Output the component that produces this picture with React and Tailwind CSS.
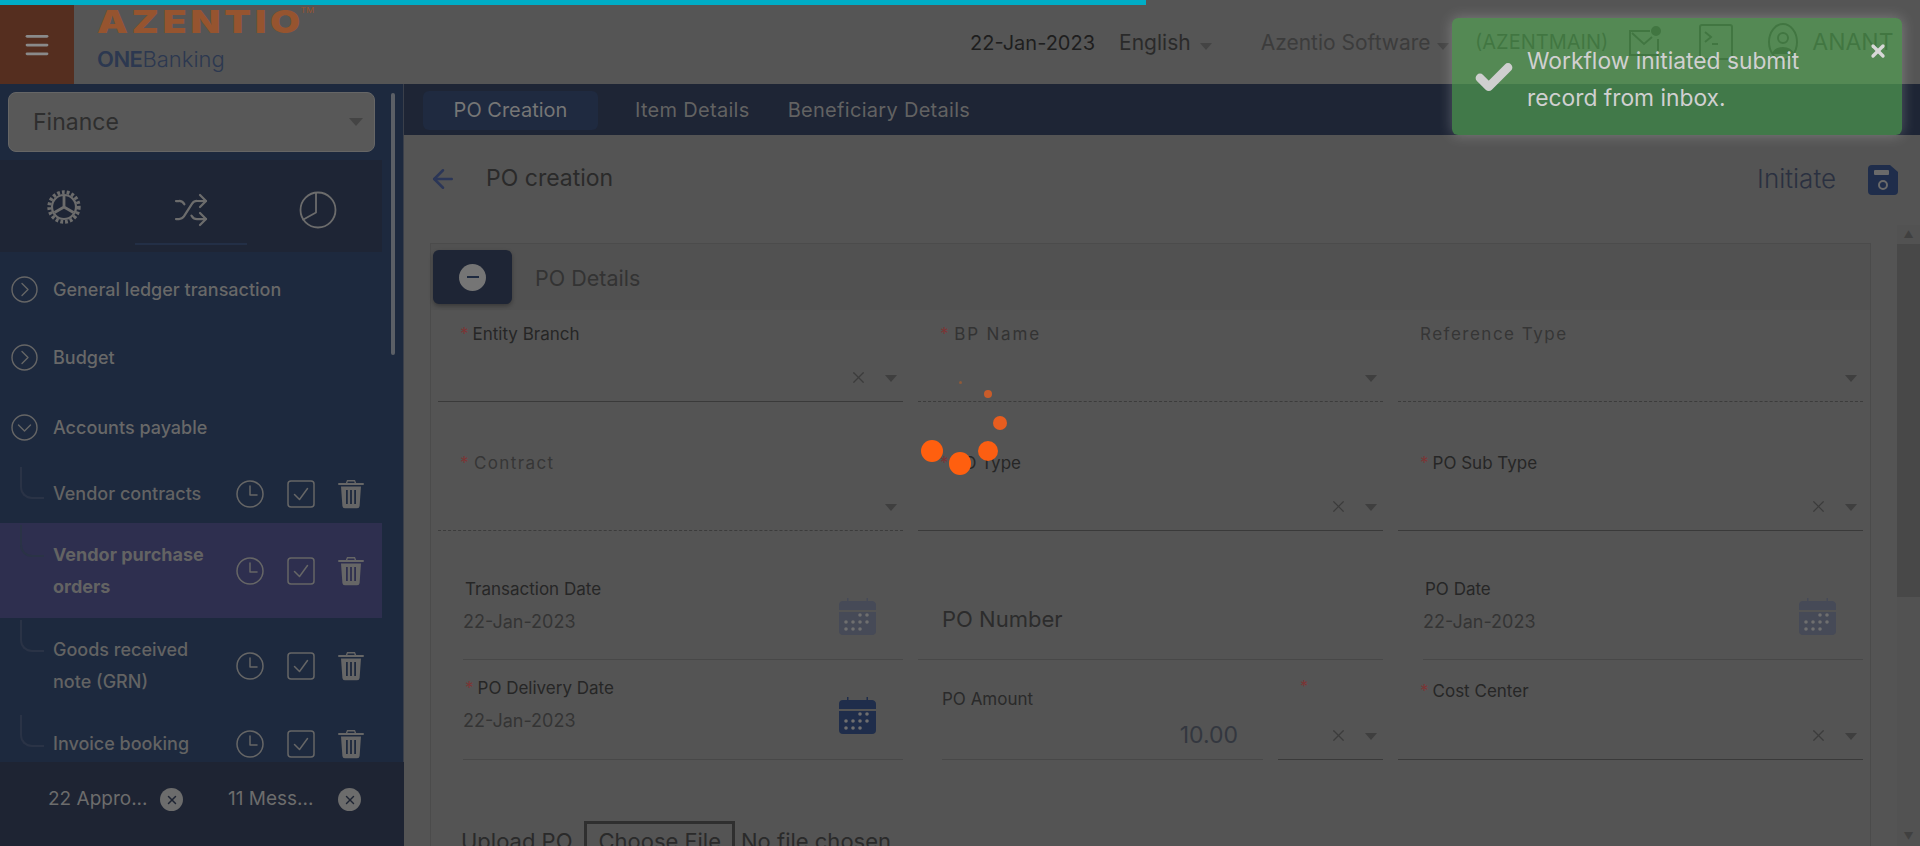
import React from 'react';
import { Shuffle, Menu, ArrowLeft, X, Check } from 'lucide-react';

const Caret = ({ className = 'border-t-[#3f3f3f]' }) => (
  <span className={`inline-block w-0 h-0 border-x-[6px] border-x-transparent border-t-[7px] ${className}`} />
);

const ChevronCircle = ({ down }) => (
  <svg width="27" height="27" viewBox="0 0 27 27" fill="none" stroke="#666" strokeWidth="1.4" strokeLinecap="round" strokeLinejoin="round">
    <circle cx="13.5" cy="13.5" r="12.5" />
    {down ? <path d="M7.5 11l6 6 6-6" /> : <path d="M11 7.5l6 6-6 6" />}
  </svg>
);

const ClockIcon = () => (
  <svg width="28" height="28" viewBox="0 0 28 28" fill="none" stroke="#666" strokeWidth="1.5" strokeLinecap="round" strokeLinejoin="round">
    <circle cx="14" cy="14" r="13" />
    <path d="M14 6v9h7" />
  </svg>
);

const CheckBoxIcon = () => (
  <svg width="28" height="28" viewBox="0 0 28 28" fill="none" stroke="#666" strokeWidth="1.5" strokeLinecap="round" strokeLinejoin="round">
    <rect x="1" y="1" width="26" height="26" rx="3" />
    <path d="M7.5 14.500l5 5 8-11" />
  </svg>
);

const TrashIcon = () => (
  <svg width="26" height="30" viewBox="0 0 26 30" fill="#666">
    <path d="M9 1h8l1.2 3H25a1 1 0 0 1 0 2H1a1 1 0 0 1 0-2h6.800zM9.800 2.600l-.4 1.400h7.200l-.4-1.400z" />
    <path d="M3 7.500h20l-1.400 19.500a2.500 2.500 0 0 1-2.500 2.300H6.900a2.500 2.500 0 0 1-2.500-2.300zM8 11v14h1.800V11zm4.100 0v14h1.800V11zm4.100 0v14H18V11z" fillRule="evenodd" />
  </svg>
);

const GearIcon = () => (
  <svg width="34" height="36" viewBox="0 0 34 36" fill="none" stroke="#6c6c6c">
    <circle cx="17" cy="18" r="14.800" strokeWidth="3.800" strokeDasharray="2.800 2.000" />
    <circle cx="17" cy="18" r="12" strokeWidth="2.200" />
    <path d="M17 18V7M17 18l9.500 5.500M17 18l-9.500 5.500" strokeWidth="2.800" />
  </svg>
);

const PieIcon = () => (
  <svg width="38" height="38" viewBox="0 0 38 38" fill="none" stroke="#6c6c6c" strokeWidth="1.800" strokeLinejoin="round">
    <circle cx="19" cy="19" r="17.500" />
    <path d="M17 2v19.500L3.500 29" />
  </svg>
);

const CalendarIcon = ({ className }) => (
  <svg width="37" height="38" viewBox="0 0 37 38" className={className}>
    <path d="M6 4h2V1h1.500v3h18V1H29v3h3.500A4 4 0 0 1 37 8v5H0V8a4 4 0 0 1 4-4z" fill="currentColor" />
    <path d="M0 15h37v19a4 4 0 0 1-4 4H4a4 4 0 0 1-4-4z" fill="currentColor" />
    <g fill="#6f6f6f">
      <circle cx="21" cy="18" r="1.800" /><circle cx="28" cy="18" r="1.800" />
      <circle cx="7" cy="25" r="1.800" /><circle cx="14" cy="25" r="1.800" /><circle cx="21" cy="25" r="1.800" /><circle cx="28" cy="25" r="1.800" />
      <circle cx="7" cy="32" r="1.800" /><circle cx="14" cy="32" r="1.800" /><circle cx="21" cy="32" r="1.800" />
    </g>
  </svg>
);

const RowIcons = () => (
  <div className="flex items-center gap-[23px] shrink-0">
    <ClockIcon />
    <CheckBoxIcon />
    <TrashIcon />
  </div>
);

function SubItem({ children, active, rowClass }) {
  return (
    <div className={`relative flex items-center w-[382px] pl-[53px] pr-[18px] ${rowClass} ${active ? 'bg-[#2e2f4f] font-bold' : 'font-medium'}`}>
      <span className="absolute left-[20px] top-[2px] w-[24px] h-[32px] border-l-2 border-b-2 border-[#2a3346] rounded-bl-xl" />
      <span className="flex-1 pr-[14px] text-[18px] leading-[32px] text-[#636363]">{children}</span>
      <RowIcons />
    </div>
  );
}

function TopItem({ label, down, rowClass }) {
  return (
    <div className={`flex items-center gap-[15px] pl-[11px] text-[18px] font-medium text-[#686868] ${rowClass}`}>
      <ChevronCircle down={down} />
      <span>{label}</span>
    </div>
  );
}

function Field({ label, required, dashed, clear, rowClass, labelClass = 'text-[#262626]', tracking = '' }) {
  return (
    <div className={`flex flex-col ${rowClass} ${dashed ? 'border-b border-dashed border-[#3c3c3c]' : 'border-b border-[#3a3a3a]'}`}>
      <div className={`flex items-start text-[17px] leading-5 pl-[22px] ${labelClass} ${tracking}`}>
        {required && <span className="text-[#7c3434] mr-[4px]">*</span>}
        <span>{label}</span>
      </div>
      <div className="mt-auto flex items-center justify-end h-[18px] mb-[15px] pr-[6px]">
        {clear && <X size={19} strokeWidth={1.500} className="text-[#3c3c3c] mr-[17px]" />}
        <span className="mt-[3px] flex"><Caret /></span>
      </div>
    </div>
  );
}

function DateField({ label, required, dim, rowClass }) {
  return (
    <div className={`flex justify-between ml-[25px] ${rowClass} border-b border-[#484848]`}>
      <div>
        <div className="text-[17px] leading-5 text-[#262626] pl-[2px]">
          {required && <span className="text-[#7c3434] mr-[4px]">*</span>}
          {label}
        </div>
        <div className="mt-[13px] text-[18px] leading-5 text-[#343434]">22-Jan-2023</div>
      </div>
      <CalendarIcon className={`mt-[18px] mr-[27px] ${dim ? 'text-[#464a57]' : 'text-[#1f2d4b]'}`} />
    </div>
  );
}

export default function App() {
  return (
    <div className="relative h-[846px] w-[1920px] overflow-hidden bg-[#545454] font-['Inter',sans-serif]">
      {/* Header */}
      <header className="flex h-[84px] bg-[#555555]">
        <div className="flex items-center justify-center w-[74px] mt-[5px] bg-[#552e1f] text-[#8a8a8a]">
          <Menu size={30} strokeWidth={2.200} />
        </div>
        <div className="w-[286px] pl-[23px] pt-[5px]">
          <div className="relative w-fit origin-left scale-x-[1.26] font-black text-[31px] leading-[34px] tracking-[3px] text-[#96542f]">
            AZENTIO
            <span className="absolute -right-[8px] top-[2px] text-[7px] leading-[8px] tracking-normal font-normal">TM</span>
          </div>
          <div className="mt-[7px] text-[22px] leading-[26px] text-[#2c3850]">
            <span className="font-semibold tracking-[-0.500px]">ONE</span><span className="font-light">Banking</span>
          </div>
        </div>
        <div className="flex items-center h-full pt-[2px] text-[21px]">
          <span className="ml-[610px] text-[20px] text-[#1e1e1e]">22-Jan-2023</span>
          <span className="ml-[24px] text-[#2a2a2a]">English</span>
          <span className="ml-[9px]"><Caret className="border-t-[#444444]" /></span>
          <span className="ml-[49px] text-[#3c3c3c] whitespace-nowrap">Azentio Software</span>
          <span className="ml-[6px]"><Caret className="border-t-[#444444]" /></span>
        </div>
      </header>

      <div className="flex h-[762px]">
        {/* Sidebar */}
        <aside className="relative w-[404px] shrink-0 bg-[#1d293e] border-r border-[#3a3f4a]">
          <div className="h-[76px] pt-[8px] pl-[8px]">
            <div className="flex items-center justify-between w-[367px] h-[60px] pl-[24px] pr-[11px] rounded-lg bg-[#585858] border border-[#666] text-[23px] text-[#2e2e2e]">
              Finance
              <Caret className="border-t-[#444] border-x-[7px] border-t-[8px]" />
            </div>
          </div>
          <div className="relative flex items-center w-[382px] h-[92px] pt-[2px] bg-[#1e2535]">
            <div className="flex-1 flex justify-center"><GearIcon /></div>
            <div className="flex-1 flex justify-center pt-[5px] text-[#6c6c6c]"><Shuffle size={36} strokeWidth={1.500} /></div>
            <div className="flex-1 flex justify-center pt-[6px]"><PieIcon /></div>
            <span className="absolute left-[135px] bottom-[7px] w-[112px] h-[2px] bg-[#232f46]" />
          </div>
          <TopItem label="General ledger transaction" rowClass="h-[74px]" />
          <TopItem label="Budget" rowClass="h-[63px]" />
          <TopItem label="Accounts payable" down rowClass="h-[76px]" />
          <SubItem rowClass="h-[58px]">Vendor contracts</SubItem>
          <SubItem active rowClass="h-[95px]">Vendor purchase orders</SubItem>
          <SubItem rowClass="h-[95px]">Goods received note (GRN)</SubItem>
          <SubItem rowClass="h-[62px]">Invoice booking</SubItem>
          <span className="absolute left-[391px] top-[9px] w-[4px] h-[262px] rounded bg-[#5b5f66]" />
          <div className="absolute left-0 bottom-0 w-[404px] h-[84px] flex items-center pb-[9px] bg-[#1e2433] text-[19px] text-[#6c6c6c]">
            <span className="ml-[48px] w-[112px]">22 Appro...</span>
            <span className="flex items-center justify-center w-[23px] h-[23px] rounded-full bg-[#6c6c6c] text-[#1e2433]"><X size={14} strokeWidth={2.500} /></span>
            <span className="ml-[45px] w-[110px]">11 Mess...</span>
            <span className="flex items-center justify-center w-[23px] h-[23px] rounded-full bg-[#6c6c6c] text-[#1e2433]"><X size={14} strokeWidth={2.500} /></span>
          </div>
        </aside>

        {/* Main */}
        <main className="flex-1 min-w-0 flex flex-col">
          <div className="flex items-center h-[51px] pl-[19px] pt-[1px] bg-[#1e2535] text-[20px] tracking-[0.300px] text-[#626262]">
            <span className="flex items-center justify-center w-[175px] h-[39px] rounded-md bg-[#1f2a40] tracking-normal text-[#767676]">PO Creation</span>
            <span className="ml-[37px]">Item Details</span>
            <span className="ml-[38px]">Beneficiary Details</span>
          </div>
          <div className="flex items-center h-[90px] pb-[3px] pl-[24px] pr-[22px]">
            <ArrowLeft size={30} strokeWidth={2} className="text-[#2b3657]" />
            <span className="ml-[28px] text-[23px] text-[#2a2a2a]">PO creation</span>
            <span className="ml-auto text-[26px] font-light text-[#2a3040]">Initiate</span>
            <svg width="30" height="30" viewBox="0 0 30 30" className="ml-[32px] mt-[3px]">
              <path d="M4 0h18l8 7v19a4 4 0 0 1-4 4H4a4 4 0 0 1-4-4V4a4 4 0 0 1 4-4z" fill="#1f2d4b" />
              <rect x="6" y="5" width="15" height="5" rx="1" fill="#6a6a6a" />
              <circle cx="15" cy="20" r="4" fill="none" stroke="#6a6a6a" strokeWidth="2" />
            </svg>
          </div>
          <div className="flex flex-1 min-h-0">
            <div className="flex-1 min-w-0 pl-[26px] pt-[18px]">
              <div className="w-[1441px] h-[700px] border border-[#4b4b4b]">
                <div className="flex items-center h-[66px] pl-[2px] bg-[#515151]">
                  <div className="flex items-center justify-center w-[79px] h-[54px] rounded-md bg-[#1e2535] shadow-[0_2px_4px_rgba(0,0,0,0.3)]">
                    <span className="flex items-center justify-center w-[27px] h-[27px] rounded-full bg-[#757575]">
                      <span className="w-[12px] h-[2px] bg-[#1e2a40]" />
                    </span>
                  </div>
                  <span className="ml-[23px] pt-[2px] text-[21.500px] text-[#333]">PO Details</span>
                </div>
                <div className="pl-[7px]">
                  <div className="grid grid-cols-[465px_465px_465px] gap-x-[15px]">
                    <Field rowClass="h-[92px] pt-[14px]" label="Entity Branch" required clear />
                    <Field rowClass="h-[92px] pt-[14px]" label="BP Name" required dashed labelClass="text-[#333333]" tracking="tracking-[1.800px]" />
                    <Field rowClass="h-[92px] pt-[14px]" label="Reference Type" dashed labelClass="text-[#363636]" tracking="tracking-[1.500px]" />
                    <Field rowClass="h-[129px] pt-[51px]" label="Contract" required dashed labelClass="text-[#363636]" tracking="tracking-[1.400px]" />
                    <Field rowClass="h-[129px] pt-[51px]" label="PO Type" required clear />
                    <Field rowClass="h-[129px] pt-[51px]" label="PO Sub Type" required clear />
                    <DateField rowClass="h-[129px] pt-[48px]" label="Transaction Date" dim />
                    <div className="flex items-center h-[129px] pt-[48px] pl-[24px] text-[22px] text-[#2c2c2c] border-b border-[#484848]">PO Number</div>
                    <DateField rowClass="h-[129px] pt-[48px]" label="PO Date" dim />
                    <DateField rowClass="h-[100px] pt-[18px]" label="PO Delivery Date" required />
                    <div className="flex gap-x-[15px] h-[100px]">
                      <div className="flex-1 ml-[24px] pt-[29px] border-b border-[#484848]">
                        <div className="text-[17px] leading-5 text-[#2a2a2a]">PO Amount</div>
                        <div className="mt-[14px] pr-[25px] text-right text-[23px] leading-6 text-[#33373f]">10.00</div>
                      </div>
                      <div className="flex flex-col w-[105px] border-b border-[#3a3a3a]">
                        <span className="pt-[16px] pl-[22px] text-[16px] leading-5 text-[#7c3434]">*</span>
                        <div className="mt-auto flex items-center justify-end h-[18px] mb-[15px] pr-[6px]">
                          <X size={19} strokeWidth={1.500} className="text-[#3c3c3c] mr-[17px]" />
                          <span className="mt-[3px] flex"><Caret /></span>
                        </div>
                      </div>
                    </div>
                    <Field rowClass="h-[100px] pt-[21px]" label="Cost Center" required clear />
                  </div>
                  <div className="flex items-center pl-[23px] pt-[61px] text-[22px] text-[#2a2a2a]">
                    <span>Upload PO</span>
                    <span className="ml-[12px] px-[11px] h-[40px] flex items-center border-[3px] border-[#2f2f2f]">Choose File</span>
                    <span className="ml-[6px]">No file chosen</span>
                  </div>
                </div>
              </div>
            </div>
            <div className="flex flex-col items-center w-[23px] shrink-0 bg-[#525252] text-[#404040]">
              <span className="h-[19px] text-[10px] leading-[19px]">▲</span>
              <span className="w-[23px] h-[353px] bg-[#484848]" />
              <span className="mt-auto h-[20px] text-[10px] leading-[20px]">▼</span>
            </div>
          </div>
        </main>
      </div>

      {/* Page loading bar */}
      <span className="absolute left-0 top-0 w-[1146px] h-[5px] bg-[#00adc6]" />

      {/* Header items behind the toast */}
      <div className="absolute left-[1475px] top-[22px] flex items-center h-[40px] text-[20px] text-[#1e1e1e] whitespace-nowrap">
        <span>(AZENTMAIN)</span>
        <svg width="34" height="34" viewBox="0 0 34 34" fill="none" stroke="#1e1e1e" strokeWidth="2" className="ml-[20px]">
          <path d="M22 6H2v24h28V14M4 8l12 11 8-7" />
          <circle cx="28" cy="6" r="4" fill="#1e1e1e" />
        </svg>
        <svg width="34" height="40" viewBox="0 0 34 40" fill="none" stroke="#1e1e1e" strokeWidth="2" className="ml-[37px]">
          <rect x="1" y="3" width="32" height="34" rx="2" />
          <path d="M6 10l6 5-6 5M13 22h6" />
        </svg>
        <svg width="30" height="40" viewBox="0 0 30 40" fill="none" stroke="#1e1e1e" strokeWidth="2" className="ml-[35px]">
          <ellipse cx="15" cy="20" rx="14" ry="18" />
          <circle cx="15" cy="16" r="5" />
          <path d="M5 32c3-8 17-8 20 0" fill="#1e1e1e" />
        </svg>
        <span className="ml-[14px] text-[23px]">ANANT</span>
      </div>

      {/* Toast */}
      <div className="absolute left-[1452px] top-[18px] flex w-[450px] h-[117px] rounded-md bg-[#54a654]/65 shadow-[0_0_14px_rgba(255,255,255,0.25)]">
        <Check size={42} strokeWidth={5} className="ml-[21px] mt-[39px] text-[#cfcfcf]" />
        <p className="ml-[12px] pt-[24px] w-[310px] text-[22.800px] leading-[37px] text-[#d0d0d0]">Workflow initiated submit record from inbox.</p>
        <X size={20} strokeWidth={4} className="absolute right-[14px] top-[23px] text-[#d8d8d8]" />
      </div>

      {/* Spinner */}
      <span className="absolute left-[921px] top-[440px] w-[22px] h-[22px] rounded-full bg-[#ff5f0f]" />
      <span className="absolute left-[949px] top-[452px] w-[22px] h-[23px] rounded-full bg-[#ff5f0f]" />
      <span className="absolute left-[978px] top-[441px] w-[20px] h-[20px] rounded-full bg-[#fb5e12]" />
      <span className="absolute left-[993px] top-[416px] w-[14px] h-[14px] rounded-full bg-[#e85d1f]" />
      <span className="absolute left-[984px] top-[390px] w-[8px] h-[8px] rounded-full bg-[#c95c2a]" />
      <span className="absolute left-[959px] top-[381px] w-[3px] h-[3px] rounded-full bg-[#8f5a3a]" />
    </div>
  );
}
